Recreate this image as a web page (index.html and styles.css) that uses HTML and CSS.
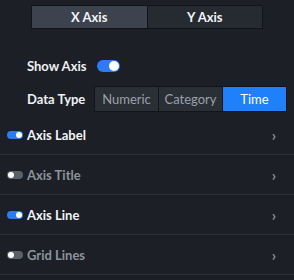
FILE: index.html
```html
<!DOCTYPE html>
<html lang="en">
<head>
  <meta charset="UTF-8" />
  <title>Axis Settings</title>
  <link rel="stylesheet" href="styles.css">
</head>
<body>
  <div class="panel">
    <div class="tabs">
      <div class="tab active">X Axis</div>
      <div class="tab">Y Axis</div>
    </div>

    <div class="field show-axis">
      <span class="field-label">Show Axis</span>
      <span class="toggle on"><span class="knob"></span></span>
    </div>

    <div class="field data-type">
      <span class="field-label">Data Type</span>
      <div class="segmented">
        <div class="seg">Numeric</div>
        <div class="seg">Category</div>
        <div class="seg selected">Time</div>
      </div>
    </div>

    <div class="section">
      <div class="section-row">
        <span class="mini-toggle on"><span class="knob"></span></span>
        <span class="section-title">Axis Label</span>
        <span class="chevron">&#8250;</span>
      </div>
      <div class="section-row off">
        <span class="mini-toggle"><span class="knob"></span></span>
        <span class="section-title">Axis Title</span>
        <span class="chevron">&#8250;</span>
      </div>
      <div class="section-row">
        <span class="mini-toggle on"><span class="knob"></span></span>
        <span class="section-title">Axis Line</span>
        <span class="chevron">&#8250;</span>
      </div>
      <div class="section-row off">
        <span class="mini-toggle"><span class="knob"></span></span>
        <span class="section-title">Grid Lines</span>
        <span class="chevron">&#8250;</span>
      </div>
    </div>
  </div>
</body>
</html>
```

FILE: styles.css
```css
* {
  box-sizing: border-box;
  margin: 0;
  padding: 0;
}

body {
  font-family: Lato, "Liberation Sans", sans-serif;
  background: #1c1f26;
  color: #e6e8ec;
  width: 294px;
  height: 280px;
  overflow: hidden;
  line-height: 16px;
}

.panel {
  padding-top: 5px;
}

.tabs {
  display: flex;
  margin-left: 31px;
  width: 232px;
  height: 24px;
  border: 1px solid #111318;
  background: #111318;
  gap: 1px;
}

.tab {
  flex: 1;
  display: flex;
  align-items: center;
  justify-content: center;
  font-size: 13px;
  font-weight: 700;
  color: #f2f4f7;
  background: #262a31;
}

.tab.active {
  background: #3c434e;
}

.field {
  display: flex;
  align-items: center;
  padding-left: 27px;
}

.field-label {
  font-size: 13px;
  font-weight: 700;
  color: #eef0f3;
}

.show-axis {
  margin-top: 31px;
  height: 12px;
  gap: 11px;
}

.toggle {
  position: relative;
  display: inline-block;
  width: 23px;
  height: 12px;
  border-radius: 6px;
  background: #2e7bf6;
}

.toggle .knob {
  position: absolute;
  top: 1px;
  right: 1px;
  width: 10px;
  height: 10px;
  border-radius: 50%;
  background: #ffffff;
}

.data-type {
  margin-top: 14px;
}

.data-type .field-label {
  width: 67px;
}

.segmented {
  display: flex;
  height: 26px;
  border: 1px solid #121419;
  background: #121419;
  gap: 1px;
}

.seg {
  width: 63px;
  display: flex;
  align-items: center;
  justify-content: center;
  font-size: 13px;
  color: #9aa1aa;
  background: #2a2e35;
}

.seg.selected {
  color: #ffffff;
  background: #1f80fc;
}

.section {
  margin-top: 3px;
}

.section-row {
  display: flex;
  align-items: center;
  height: 40px;
  padding-left: 7px;
  padding-right: 18px;
  border-bottom: 1px solid #2b2f36;
  gap: 4px;
}

.section-title {
  flex: 1;
  font-size: 13px;
  font-weight: 700;
  color: #f2f4f7;
}

.section-row.off .section-title {
  color: #8d939b;
}

.mini-toggle {
  position: relative;
  display: inline-block;
  width: 16px;
  height: 8px;
  border-radius: 4px;
  background: #5b6068;
}

.mini-toggle.on {
  background: #2e7bf6;
}

.mini-toggle .knob {
  position: absolute;
  top: 1px;
  left: 1px;
  width: 6px;
  height: 6px;
  border-radius: 50%;
  background: #ffffff;
}

.mini-toggle.on .knob {
  left: auto;
  right: 1px;
}

.chevron {
  font-size: 15px;
  font-weight: 700;
  color: #8a919b;
}
```
